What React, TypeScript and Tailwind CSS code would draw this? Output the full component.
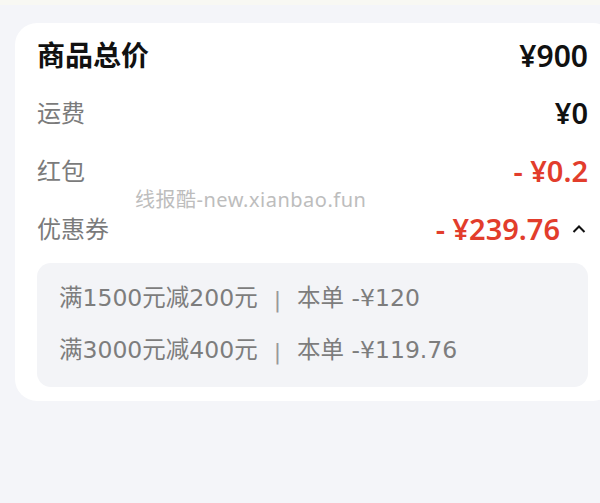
const rows = [
  { label: "运费", value: "¥0", red: false },
  { label: "红包", value: "- ¥0.2", red: true },
];

const coupons = [
  { rule: "满1500元减200元", save: "本单 -¥120" },
  { rule: "满3000元减400元", save: "本单 -¥119.76" },
];

export default function App() {
  return (
    <div
      className="min-h-[503px] w-[600px] overflow-hidden bg-[#f4f5f9]"
      style={{ fontFamily: '"Noto Sans", "Noto Sans CJK SC", sans-serif' }}
    >
      <div className="h-[5px] bg-[#f8f8f3]" />
      <div className="ml-[15px] mt-[18px] w-[600px] rounded-[22px] bg-white pb-[14px] pl-[22px] pr-[27px] pt-[3px]">
        <div className="flex h-[58px] items-center justify-between">
          <span className="text-[28px] font-bold text-[#111]">商品总价</span>
          <span className="text-[30px] font-semibold text-[#111]">¥900</span>
        </div>

        {rows.map((r) => (
          <div key={r.label} className="flex h-[58px] items-center justify-between">
            <span className="text-[24px] text-[#7b7b7b]">{r.label}</span>
            <span
              className={
                r.red
                  ? "text-[29px] font-semibold text-[#e23d2c]"
                  : "text-[29px] font-semibold text-[#111]"
              }
            >
              {r.value}
            </span>
          </div>
        ))}

        <div className="relative flex h-[58px] items-center justify-between">
          <span className="text-[24px] text-[#7b7b7b]">优惠券</span>
          <span className="absolute left-[98px] top-[-15px] text-[20px] tracking-[0.5px] text-[#bdbdbd]">
            线报酷-new.xianbao.fun
          </span>
          <div className="flex items-center gap-[12px]">
            <span className="text-[29px] font-semibold text-[#e23d2c]">- ¥239.76</span>
            <svg width="14" height="10" viewBox="0 0 14 10" className="mr-[2px]">
              <polyline points="1.5,8 7,2.5 12.5,8" fill="none" stroke="#111" strokeWidth="2" />
            </svg>
          </div>
        </div>

        <div
          className="mt-[5px] rounded-[14px] bg-[#f3f4f7] px-[22px] py-[10px]"
          style={{ fontFamily: '"DejaVu Sans", "Noto Sans CJK SC", sans-serif' }}
        >
          {coupons.map((c) => (
            <div key={c.rule} className="flex h-[52px] items-center text-[23.5px] text-[#7d7d7d]">
              <span>{c.rule}</span>
              <span className="mx-[16px] text-[22px] text-[#999]">|</span>
              <span>{c.save}</span>
            </div>
          ))}
        </div>
      </div>
    </div>
  );
}
